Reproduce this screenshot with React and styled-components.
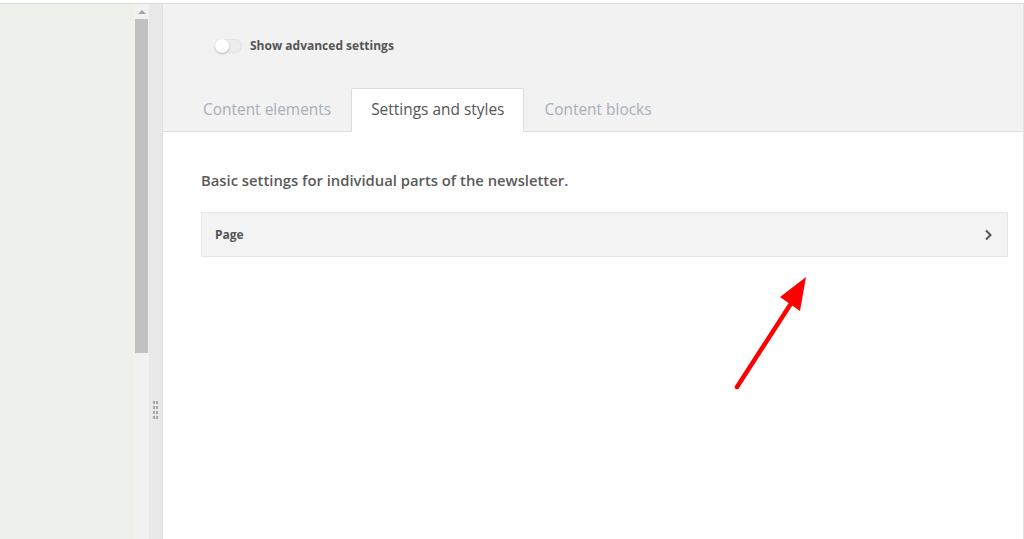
import React from 'react'
import styled, { createGlobalStyle } from 'styled-components'

const GlobalStyle = createGlobalStyle`
  html, body {
    margin: 0;
    padding: 0;
    height: 100%;
    overflow: hidden;
    background: #fff;
  }
  body {
    font-family: 'Open Sans', 'DejaVu Sans', sans-serif;
  }
  #root {
    height: 100%;
  }
`

const Frame = styled.div`
  height: 539px;
  padding-top: 3px;
  box-sizing: border-box;
  display: flex;
  flex-direction: column;
  background: #fff;
`

const Body = styled.div`
  flex: 1;
  display: flex;
  border-top: 1px solid #dcdcdc;
  min-height: 0;
`

const Preview = styled.div`
  width: 134px;
  background: #eef0eb;
`

const Scrollbar = styled.div`
  width: 15px;
  background: #f1f1f1;
  display: flex;
  flex-direction: column;
  align-items: center;
`

const ScrollArrow = styled.div`
  height: 15px;
  width: 100%;
  display: flex;
  align-items: center;
  justify-content: center;
  &::before {
    content: '';
    border-left: 4px solid transparent;
    border-right: 4px solid transparent;
    border-bottom: 4px solid #a3a3a3;
  }
`

const Thumb = styled.div`
  width: 13px;
  height: 334px;
  background: #c1c1c1;
`

const Splitter = styled.div`
  width: 14px;
  background: #e8e8e8;
  border-right: 1px solid #dedede;
  display: flex;
  align-items: center;
  justify-content: center;
  padding-top: 276px;
  box-sizing: border-box;
`

const Grip = styled.div`
  display: grid;
  grid-template-columns: 2px 2px;
  gap: 2px 1px;
  span {
    width: 2px;
    height: 3px;
    background: #a8a8a8;
  }
`

const Editor = styled.div`
  flex: 1;
  display: flex;
  flex-direction: column;
  border-right: 1px solid #e2e2e2;
`

const Header = styled.div`
  background: #f2f2f2;
  border-bottom: 1px solid #dedede;
  padding: 33px 0 0 20px;
  display: flex;
  flex-direction: column;
  height: 128px;
  box-sizing: border-box;
`

const ToggleRow = styled.label`
  display: flex;
  align-items: center;
  gap: 8px;
  padding-left: 32px;
  font-size: 12px;
  font-weight: 700;
  color: #555;
`

const Switch = styled.span`
  position: relative;
  width: 27px;
  height: 14px;
  border-radius: 7px;
  background: #ececec;
  box-shadow: inset 0 0 0 1px #e4e4e4;
  &::after {
    content: '';
    position: absolute;
    left: 0;
    top: 0;
    width: 14px;
    height: 14px;
    border-radius: 50%;
    background: #fff;
    box-shadow: 0 1px 2px rgba(0, 0, 0, 0.25);
  }
`

const Tabs = styled.div`
  margin-top: auto;
  display: flex;
  margin-bottom: -1px;
`

const Tab = styled.div`
  height: 44px;
  box-sizing: border-box;
  padding: 0 19px 2px;
  display: flex;
  align-items: center;
  font-size: 15.45px;
  color: ${({ active }) => (active ? '#555' : '#a7afbd')};
  background: ${({ active }) => (active ? '#fff' : 'transparent')};
  border: 1px solid ${({ active }) => (active ? '#dedede' : 'transparent')};
  border-bottom-color: ${({ active }) => (active ? '#fff' : 'transparent')};
  border-radius: 2px 2px 0 0;
`

const Content = styled.div`
  flex: 1;
  padding: 38px 15px 0 38px;
  position: relative;
`

const Intro = styled.p`
  margin: 0 0 22px;
  font-size: 14.8px;
  font-weight: 600;
  color: #5a5a5a;
`

const Section = styled.div`
  height: 45px;
  box-sizing: border-box;
  background: #f3f3f3;
  border: 1px solid #e6e6e6;
  display: flex;
  align-items: center;
  justify-content: space-between;
  padding: 0 14px 0 13px;
  font-size: 12px;
  font-weight: 700;
  color: #555;
`

const Arrow = styled.svg`
  position: absolute;
  left: 569px;
  top: 143px;
`

const App = () => {
  return (
    <Frame>
      <GlobalStyle />
      <Body>
        <Preview />
        <Scrollbar>
          <ScrollArrow />
          <Thumb />
        </Scrollbar>
        <Splitter>
          <Grip>
            {Array.from({ length: 8 }).map((_, i) => (
              <span key={i} />
            ))}
          </Grip>
        </Splitter>
        <Editor>
          <Header>
            <ToggleRow>
              <Switch />
              Show advanced settings
            </ToggleRow>
            <Tabs>
              <Tab>Content elements</Tab>
              <Tab active>Settings and styles</Tab>
              <Tab>Content blocks</Tab>
            </Tabs>
          </Header>
          <Content>
            <Intro>Basic settings for individual parts of the newsletter.</Intro>
            <Section>
              Page
              <svg width="10" height="12" viewBox="0 0 10 12">
                <path d="M3 1.5 L7.5 6 L3 10.5" fill="none" stroke="#555" strokeWidth="2" />
              </svg>
            </Section>
            <Arrow width="80" height="120" viewBox="0 0 80 120">
              <path d="M5 112 L58 30" stroke="#ff0000" strokeWidth="4.5" strokeLinecap="round" fill="none" />
              <path d="M74 2 L48 22 L68 36 Z" fill="#ff0000" />
            </Arrow>
          </Content>
        </Editor>
      </Body>
    </Frame>
  )
}

export default App
